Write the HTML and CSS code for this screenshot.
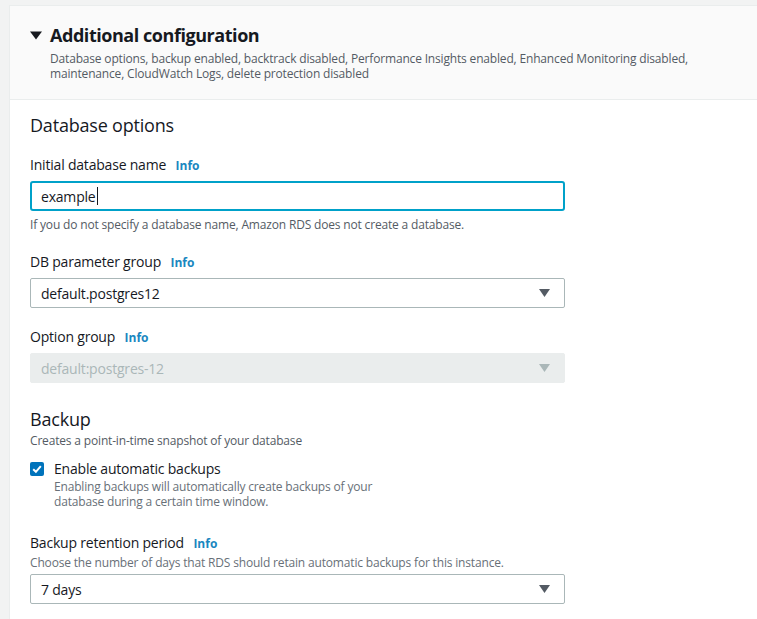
FILE: index.html
```html
<!DOCTYPE html>
<html lang="en">
<head>
<meta charset="utf-8">
<title>Additional configuration</title>
<link rel="stylesheet" href="styles.css">
</head>
<body>
<div class="panel">
  <div class="panel-header">
    <div class="title-row">
      <svg class="caret" width="12" height="9" viewBox="0 0 12 9"><path d="M0 0.5 L12 0.5 L6 8.5 Z" fill="#16191f"/></svg>
      <h2 class="title">Additional configuration</h2>
    </div>
    <p class="summary">Database options, backup enabled, backtrack disabled, Performance Insights enabled, Enhanced Monitoring disabled, maintenance, CloudWatch Logs, delete protection disabled</p>
  </div>
  <div class="panel-body">
    <h3 class="section-title">Database options</h3>

    <div class="field">
      <div class="label">Initial database name <span class="info">Info</span></div>
      <div class="input focused"><span>example</span><span class="cursor"></span></div>
      <div class="hint">If you do not specify a database name, Amazon RDS does not create a database.</div>
    </div>

    <div class="field param-field">
      <div class="label">DB parameter group <span class="info">Info</span></div>
      <div class="select"><span>default.postgres12</span><svg class="arrow" width="11" height="8" viewBox="0 0 11 8"><path d="M0 0 L11 0 L5.5 8 Z" fill="#545b64"/></svg></div>
    </div>

    <div class="field">
      <div class="label">Option group <span class="info">Info</span></div>
      <div class="select disabled"><span>default:postgres-12</span><svg class="arrow" width="11" height="8" viewBox="0 0 11 8"><path d="M0 0 L11 0 L5.5 8 Z" fill="#aab7b8"/></svg></div>
    </div>

    <h3 class="section-title backup-title">Backup</h3>
    <div class="section-desc">Creates a point-in-time snapshot of your database</div>

    <div class="check-row">
      <span class="checkbox"><svg width="14" height="14" viewBox="0 0 14 14"><path d="M3.2 7.2 L5.9 9.8 L10.8 4.2" fill="none" stroke="#fff" stroke-width="2"/></svg></span>
      <div class="check-text">
        <div class="check-label">Enable automatic backups</div>
        <div class="check-desc">Enabling backups will automatically create backups of your database during a certain time window.</div>
      </div>
    </div>

    <div class="field retention">
      <div class="label">Backup retention period <span class="info">Info</span></div>
      <div class="desc">Choose the number of days that RDS should retain automatic backups for this instance.</div>
      <div class="select"><span>7 days</span><svg class="arrow" width="11" height="8" viewBox="0 0 11 8"><path d="M0 0 L11 0 L5.5 8 Z" fill="#545b64"/></svg></div>
    </div>
  </div>
</div>
</body>
</html>
```
FILE: styles.css
```css
* { box-sizing: border-box; }
html, body {
  margin: 0;
  padding: 0;
  background: #f2f3f3;
  font-family: "Open Sans", "Liberation Sans", sans-serif;
  color: #16191f;
}
.panel {
  margin: 5px 0 0 9px;
  border: 1px solid #eaeded;
  border-right: none;
  background: #ffffff;
  height: 640px;
}
.panel-header {
  background: #fafafa;
  border-bottom: 1px solid #eaeded;
  padding: 18px 20px 17px 20px;
  height: 94px;
}
.title-row {
  display: flex;
  align-items: center;
  gap: 8px;
}
.caret { display: block; margin-top: 1px; }
.title {
  margin: 0;
  font-size: 18px;
  line-height: 22px;
  font-weight: 700;
  letter-spacing: -0.45px;
}
.summary {
  margin: 5px 0 0 20px;
  font-size: 12px;
  line-height: 15px;
  color: #545b64;
  max-width: 660px;
  letter-spacing: -0.17px;
}
.panel-body {
  padding: 14px 20px 0 20px;
}
.section-title {
  margin: 0;
  font-size: 18px;
  line-height: 22px;
  font-weight: 400;
  letter-spacing: -0.2px;
}
.field {
  width: 535px;
  margin-top: 19px;
}
.field.param-field { margin-top: 20px; }
.label {
  font-size: 14px;
  line-height: 20px;
  letter-spacing: -0.2px;
}
.info {
  font-size: 12px;
  font-weight: 700;
  color: #1a87c0;
  margin-left: 6px;
  letter-spacing: 0;
}
.input, .select {
  margin-top: 5px;
  height: 30px;
  display: flex;
  align-items: center;
  font-size: 14px;
  padding: 0 14px 0 10px;
  border-radius: 2px;
  letter-spacing: -0.2px;
}
.input.focused {
  border: 2px solid #00a1c9;
  padding-left: 9px;
  border-radius: 3px;
}
.cursor {
  display: inline-block;
  width: 1px;
  height: 18px;
  background: #16191f;
  margin-left: 1px;
}
.hint {
  margin-top: 6px;
  font-size: 12px;
  line-height: 15px;
  color: #545b64;
  letter-spacing: -0.17px;
}
.select {
  border: 1px solid #aab7b8;
  justify-content: space-between;
  background: #fff;
}
.select.disabled {
  background: #eaeded;
  border-color: #eaeded;
  color: #aab7b8;
}
.backup-title {
  margin-top: 25px;
}
.section-desc {
  margin-top: 3px;
  font-size: 12px;
  line-height: 16px;
  color: #545b64;
  letter-spacing: -0.17px;
}
.check-row {
  display: flex;
  gap: 10px;
  margin-top: 10px;
}
.checkbox {
  width: 14px;
  height: 14px;
  margin-top: 3px;
  background: #0073bb;
  border-radius: 2px;
  display: block;
}
.checkbox svg { display: block; }
.check-label {
  font-size: 14px;
  line-height: 20px;
  letter-spacing: -0.2px;
}
.check-desc {
  font-size: 12px;
  line-height: 15px;
  color: #687078;
  width: 330px;
  letter-spacing: -0.17px;
}
.retention { margin-top: 24px; }
.desc {
  margin-top: 1px;
  font-size: 12px;
  line-height: 16px;
  color: #687078;
  letter-spacing: -0.17px;
}
.retention .select { margin-top: 3px; }
```
